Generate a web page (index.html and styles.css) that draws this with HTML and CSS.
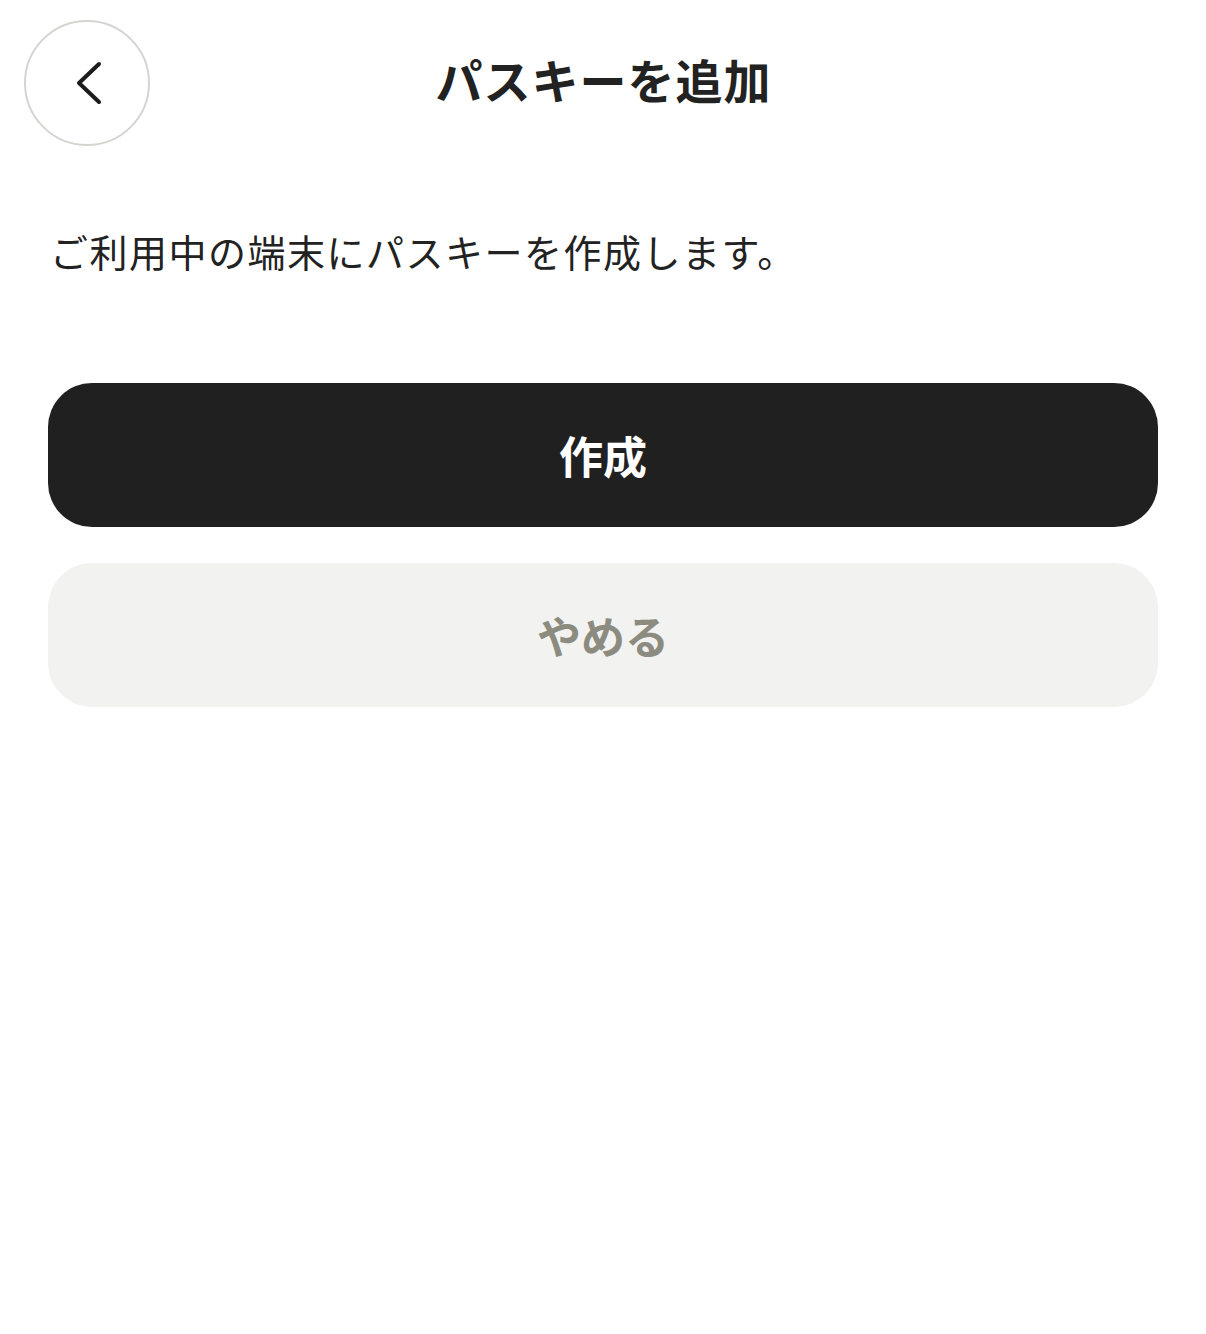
FILE: index.html
```html
<!DOCTYPE html>
<html lang="ja">
<head>
  <meta charset="UTF-8">
  <title>パスキーを追加</title>
  <link rel="stylesheet" href="styles.css">
</head>
<body>

  <header class="header">
    <button class="back-button" type="button" aria-label="戻る">
      <svg class="back-icon" viewBox="0 0 126 126" width="126" height="126">
        <polyline points="75,44 55,63 75,82" fill="none" stroke="#1c1c1c" stroke-width="4" stroke-linecap="round" stroke-linejoin="round"/>
      </svg>
    </button>
    <h1 class="title">パスキーを追加</h1>
    <div class="header-spacer"></div>
  </header>

  <main class="content">
    <p class="lead">ご利用中の端末にパスキーを作成します。</p>

    <div class="actions">
      <button class="btn btn-primary" type="button">作成</button>
      <button class="btn btn-secondary" type="button">やめる</button>
    </div>
  </main>

</body>
</html>
```

FILE: styles.css
```css
body {
  margin: 0;
  background-color: #ffffff;
  color: #222222;
  font-family: "Noto Sans CJK JP", "Noto Sans", sans-serif;
}

.header {
  display: grid;
  grid-template-columns: 126px 1fr 126px;
  align-items: center;
  padding: 20px 23px 0 24px;
}

.back-button {
  width: 126px;
  height: 126px;
  padding: 0;
  border: 2px solid #d4d4d0;
  border-radius: 50%;
  background-color: #ffffff;
  display: flex;
  align-items: center;
  justify-content: center;
  cursor: pointer;
}

.back-icon {
  display: block;
  flex: none;
}

.title {
  margin: 0 0 8px;
  text-align: center;
  font-size: 47px;
  font-weight: 700;
  line-height: 1.2;
  letter-spacing: 1px;
  color: #222222;
}

.content {
  padding: 0 48px;
}

.lead {
  margin: 76px 0 0;
  padding-left: 2px;
  font-size: 38px;
  line-height: 57px;
  letter-spacing: 1.5px;
  color: #222222;
}

.actions {
  display: flex;
  flex-direction: column;
  gap: 36px;
  margin-top: 104px;
}

.btn {
  height: 144px;
  border: none;
  border-radius: 44px;
  font-family: inherit;
  font-size: 44px;
  font-weight: 700;
  cursor: pointer;
}

.btn-primary {
  background-color: #202020;
  color: #ffffff;
}

.btn-secondary {
  background-color: #f2f2f0;
  color: #8b8b80;
}
```
